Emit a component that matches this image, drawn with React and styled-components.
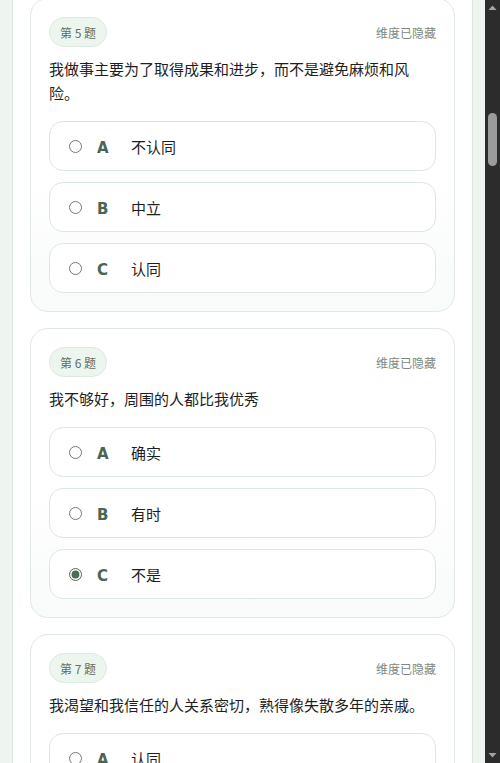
import React, { useLayoutEffect, useRef, useState } from "react";
import styled, { createGlobalStyle } from "styled-components";

const GlobalStyle = createGlobalStyle`
  html {
    background: #eef5f0;
  }
  body {
    margin: 0;
    padding-right: 15px;
    background: #eef5f0;
    font-family: "Noto Sans CJK SC", "Noto Sans", sans-serif;
    color: #222;
  }
`;

const Panel = styled.main`
  margin: 0 12px;
  background: #fff;
  border-left: 1px solid #dce8df;
  border-right: 1px solid #dce8df;
  padding: 24px 17px 40px;
  min-height: 100vh;
`;

const Header = styled.header`
  padding: 40px 6px 60px;
  h1 {
    margin: 0 0 12px;
    font-size: 22px;
    color: #2f4a38;
  }
  p {
    margin: 0;
    font-size: 14px;
    line-height: 22px;
    color: #6b7a70;
  }
`;

const List = styled.div`
  display: flex;
  flex-direction: column;
  gap: 16px;
`;

const Card = styled.section`
  border: 1px solid #dfe9e2;
  border-radius: 18px;
  background: linear-gradient(180deg, #ffffff 0%, #ffffff 55%, #f8fbf9 100%);
  padding: 18px;
`;

const CardTop = styled.div`
  display: flex;
  align-items: center;
  justify-content: space-between;
`;

const Badge = styled.span`
  display: inline-flex;
  align-items: center;
  height: 30px;
  box-sizing: border-box;
  padding: 0 10px;
  border-radius: 999px;
  background: #edf5ef;
  border: 1px solid #dde9e0;
  font-size: 12px;
  color: #5f6f64;
`;

const Hidden = styled.span`
  font-size: 12px;
  color: #7d8a82;
`;

const Question = styled.p`
  margin: 10px 0 16px;
  font-size: 15px;
  line-height: 24px;
  color: #1e1e1e;
`;

const Options = styled.div`
  display: flex;
  flex-direction: column;
  gap: 11px;
`;

const Option = styled.label`
  display: flex;
  align-items: center;
  height: 50px;
  box-sizing: border-box;
  padding: 0 19px;
  border: 1px solid #dde7e1;
  border-radius: 14px;
  background: #fff;
  cursor: pointer;

  input {
    width: 13px;
    height: 13px;
    margin: 0 15px 0 0;
    accent-color: #4f6b58;
  }
`;

const Letter = styled.span`
  width: 34px;
  margin-top: 3px;
  font-family: "DejaVu Sans", sans-serif;
  font-weight: 700;
  font-size: 15px;
  color: #4a6553;
`;

const OptionText = styled.span`
  font-size: 15px;
  color: #1e1e1e;
`;

const Footer = styled.div`
  display: flex;
  justify-content: center;
  padding: 40px 0 200px;
`;

const Submit = styled.button`
  border: none;
  border-radius: 999px;
  background: #4f6b58;
  color: #fff;
  font-family: inherit;
  font-size: 15px;
  padding: 12px 48px;
`;

/* window scrollbar drawn over the right edge */
const ScrollTrack = styled.div`
  position: fixed;
  top: 0;
  right: 0;
  bottom: 0;
  width: 15px;
  background: #2c2c2c;
  display: flex;
  flex-direction: column;
  justify-content: space-between;
  align-items: center;
`;

const Arrow = styled.svg`
  width: 15px;
  height: 15px;
  display: block;
`;

const Thumb = styled.div`
  position: absolute;
  top: 113px;
  left: 3px;
  width: 9px;
  height: 53px;
  border-radius: 5px;
  background: #9b9b9b;
`;

const agree = ["不认同", "中立", "认同"];
const often = ["确实", "有时", "不是"];

const questions = [
  { q: "我喜欢按计划行事，不喜欢临时变动", opts: agree, pick: 2 },
  { q: "遇到冲突时，我会先照顾别人的感受", opts: agree, pick: 1 },
  { q: "我常常担心自己做得不够好", opts: often, pick: 1 },
  { q: "我更愿意独立完成工作", opts: agree, pick: 0 },
  { q: "我做事主要为了取得成果和进步，而不是避免麻烦和风险。", opts: agree },
  { q: "我不够好，周围的人都比我优秀", opts: often, pick: 2 },
  { q: "我渴望和我信任的人关系密切，熟得像失散多年的亲戚。", opts: ["认同", "中立", "不认同"] },
  { q: "我很在意别人如何评价我", opts: agree },
  { q: "我常常把事情拖到最后一刻", opts: often },
  { q: "我喜欢尝试新鲜事物", opts: agree },
  { q: "面对压力时我能保持冷静", opts: agree },
  { q: "我容易被他人的情绪影响", opts: often },
  { q: "我习惯先思考再行动", opts: agree },
  { q: "我希望自己在团队中被认可", opts: agree },
  { q: "我很难拒绝别人的请求", opts: often },
  { q: "我对细节要求很高", opts: agree },
  { q: "我喜欢掌控局面", opts: agree },
  { q: "独处时我感到放松", opts: often },
  { q: "我相信努力一定会有回报", opts: agree },
  { q: "我经常反思自己的言行", opts: agree },
  { q: "我害怕让别人失望", opts: often },
  { q: "我愿意为了目标放弃眼前的享受", opts: agree },
  { q: "我喜欢帮助别人解决问题", opts: agree },
  { q: "我不太相信陌生人", opts: often },
  { q: "我觉得规则应该被严格遵守", opts: agree },
  { q: "我会主动表达自己的想法", opts: agree },
  { q: "我常常感到孤单", opts: often },
  { q: "我更看重过程而不是结果", opts: agree },
  { q: "我喜欢成为大家关注的焦点", opts: agree },
  { q: "我容易对自己生气", opts: often },
  { q: "我享受竞争带来的刺激", opts: agree },
  { q: "我需要别人的肯定才能安心", opts: agree },
  { q: "我对未来充满信心", opts: often },
];

const letters = ["A", "B", "C"];

function QuestionCard({ index, item, answer, onPick, cardRef }) {
  return (
    <Card ref={cardRef}>
      <CardTop>
        <Badge>第 {index + 1} 题</Badge>
        <Hidden>维度已隐藏</Hidden>
      </CardTop>
      <Question>{item.q}</Question>
      <Options>
        {item.opts.map((text, i) => (
          <Option key={i}>
            <input
              type="radio"
              name={`q${index}`}
              checked={answer === i}
              onChange={() => onPick(index, i)}
            />
            <Letter>{letters[i]}</Letter>
            <OptionText>{text}</OptionText>
          </Option>
        ))}
      </Options>
    </Card>
  );
}

export default function App() {
  const [answers, setAnswers] = useState(() =>
    questions.map((q) => (q.pick === undefined ? -1 : q.pick))
  );
  const focusRef = useRef(null);

  useLayoutEffect(() => {
    const el = focusRef.current;
    if (!el) return;
    const top = el.getBoundingClientRect().top + window.scrollY;
    window.scrollTo(0, top + 2);
  }, []);

  const pick = (qi, oi) => {
    setAnswers((prev) => prev.map((a, i) => (i === qi ? oi : a)));
  };

  return (
    <>
      <GlobalStyle />
      <Panel>
        <Header>
          <h1>性格倾向测评</h1>
          <p>请根据你的真实情况作答，没有对错之分。</p>
        </Header>
        <List>
          {questions.map((item, i) => (
            <QuestionCard
              key={i}
              index={i}
              item={item}
              answer={answers[i]}
              onPick={pick}
              cardRef={i === 4 ? focusRef : undefined}
            />
          ))}
        </List>
        <Footer>
          <Submit>提交答案</Submit>
        </Footer>
      </Panel>
      <ScrollTrack>
        <Arrow viewBox="0 0 15 15">
          <path d="M3.5 10h8L7.5 5.5z" fill="#a3a3a3" />
        </Arrow>
        <Thumb />
        <Arrow viewBox="0 0 15 15">
          <path d="M3.5 5h8L7.5 9.5z" fill="#a3a3a3" />
        </Arrow>
      </ScrollTrack>
    </>
  );
}
